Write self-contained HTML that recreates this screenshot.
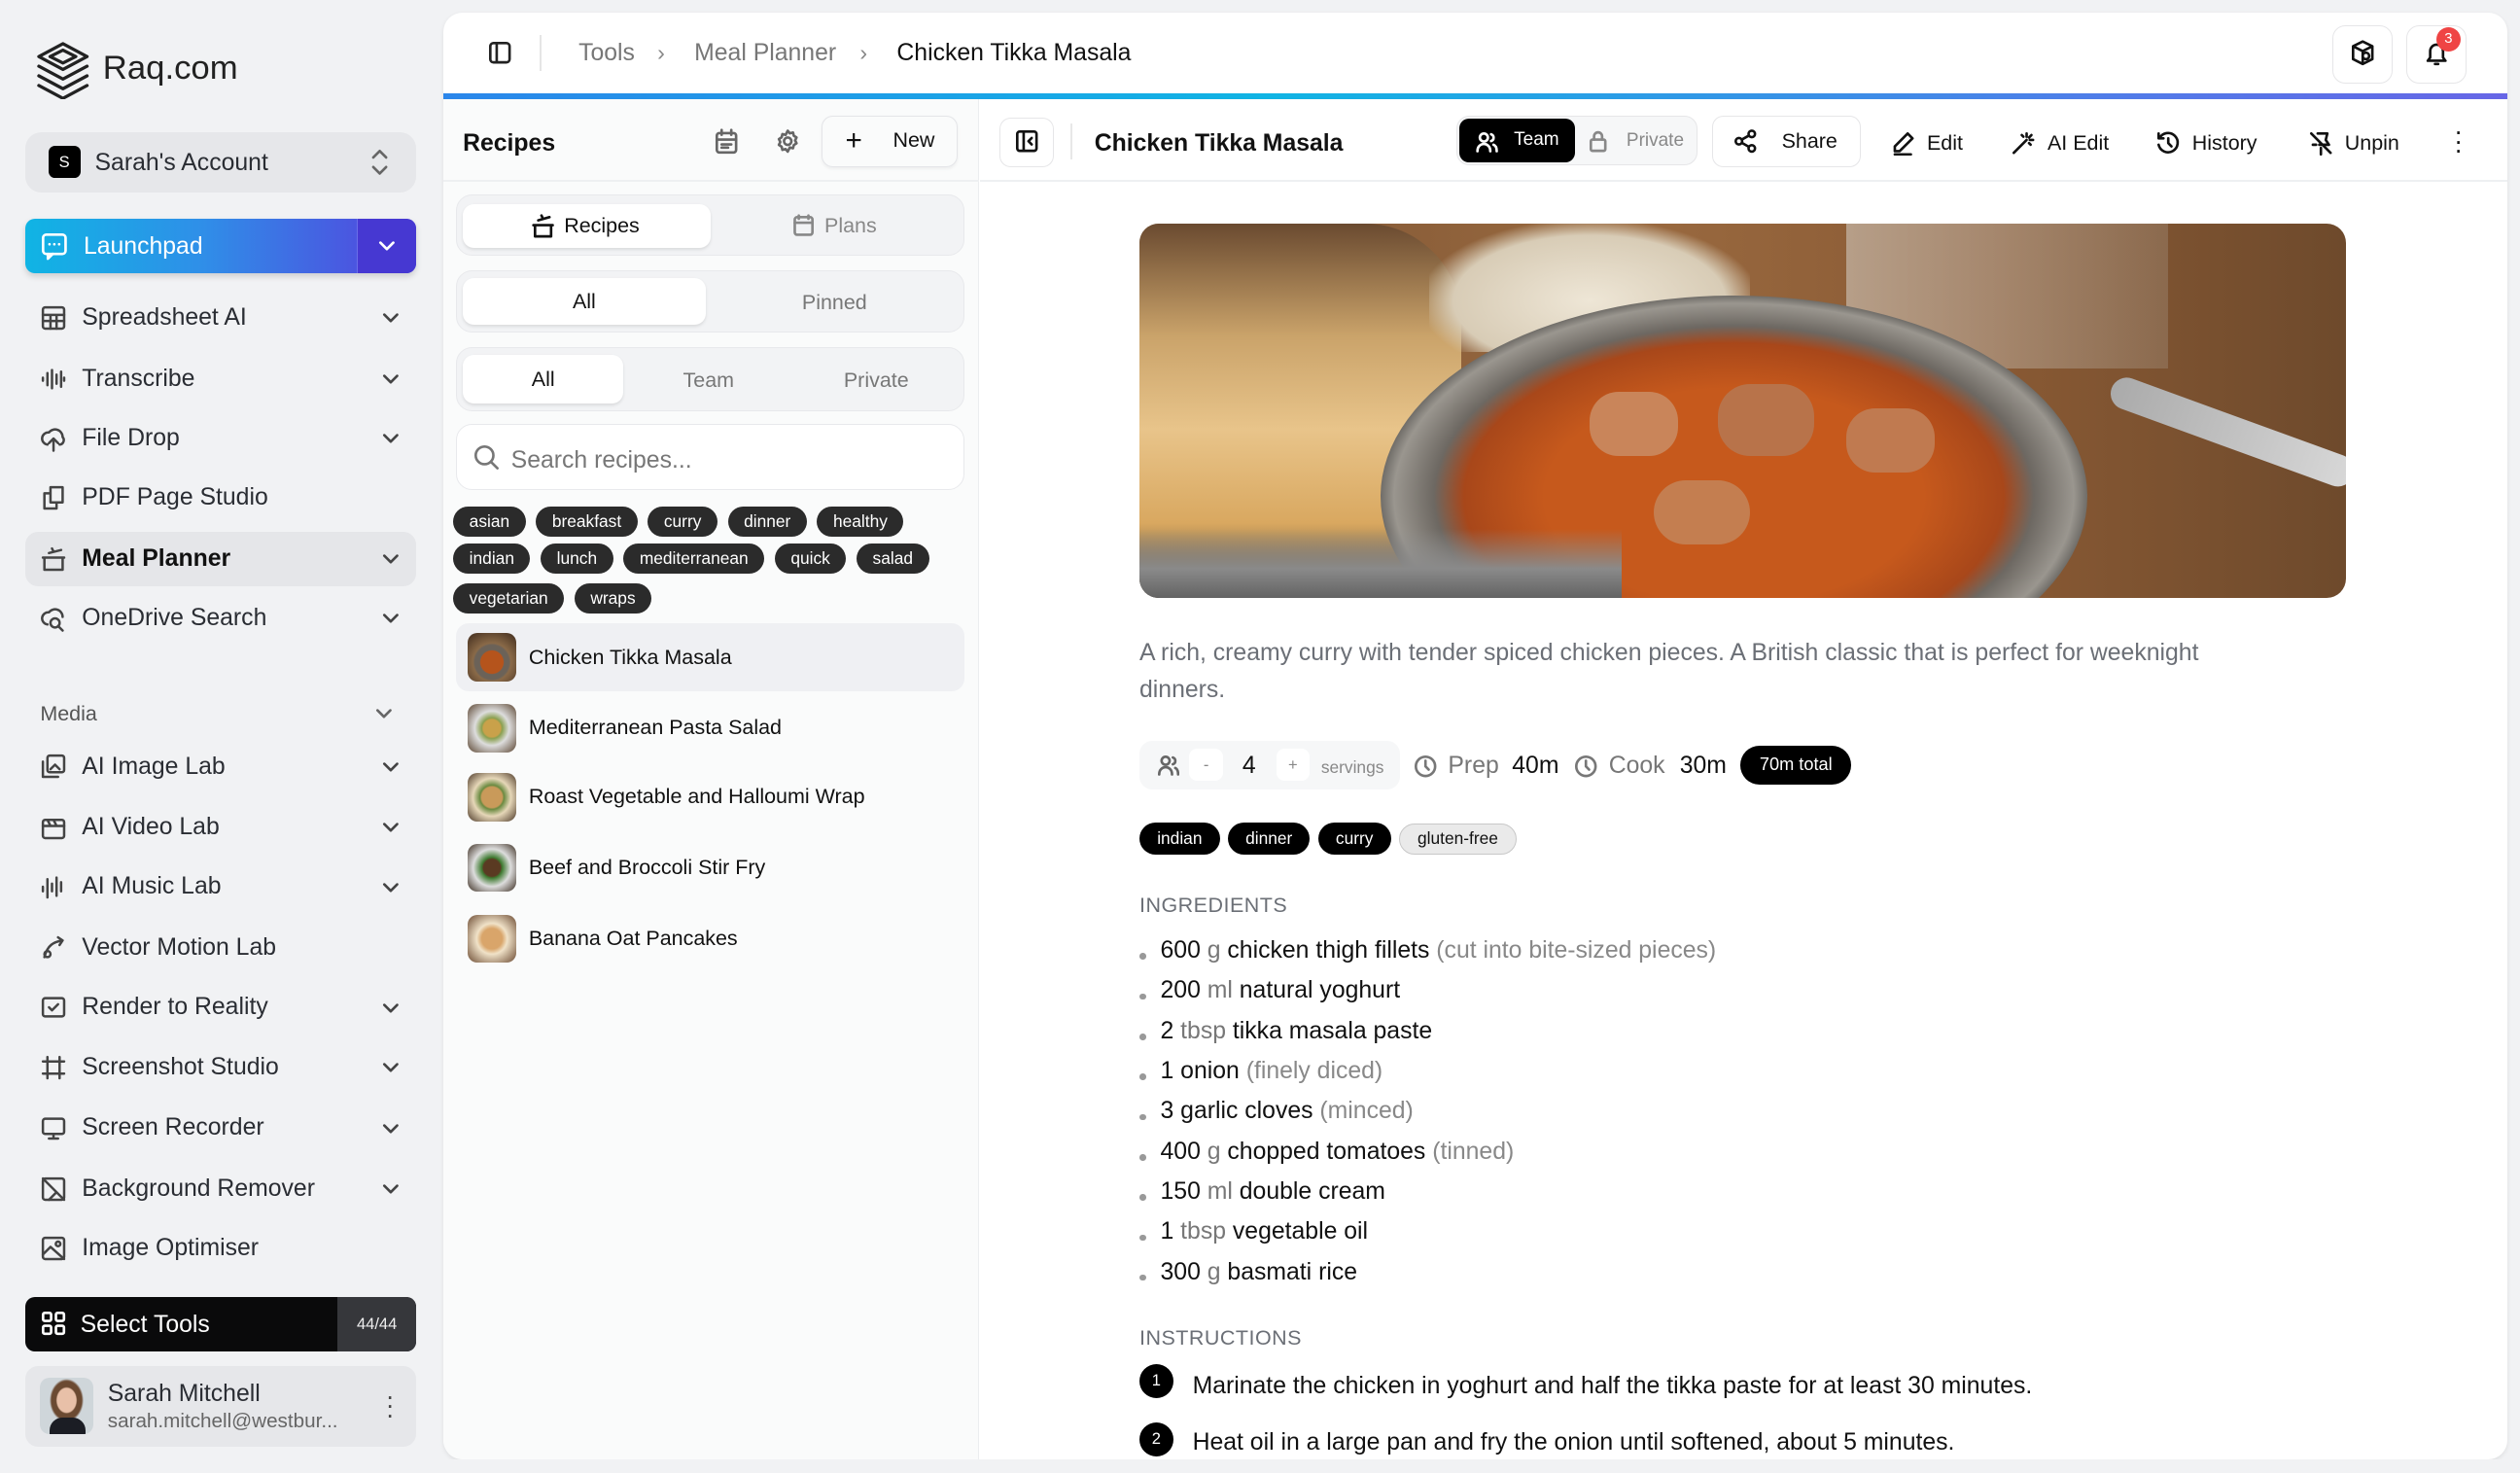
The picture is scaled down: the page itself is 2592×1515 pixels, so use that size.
<!DOCTYPE html>
<html><head><meta charset="utf-8"><style>
*{box-sizing:border-box;margin:0;padding:0}
html,body{width:2592px;height:1515px;overflow:hidden;background:#f1f2f4}
#w{zoom:1.65306;width:1568px;height:917px;position:relative;font-family:"Liberation Sans",sans-serif;color:#111;background:#f1f2f4}
.a{position:absolute}
svg{fill:none;stroke:currentColor;stroke-width:1.6;stroke-linecap:round;stroke-linejoin:round}
.nav{position:absolute;left:16px;width:243px;height:34px;display:flex;align-items:center;padding-left:9px;font-size:15px;color:#2a2d33}
.nav svg{width:17px;height:17px;margin-right:9px;color:#444}
.nav .ch{position:absolute;right:10px;width:12px;height:12px;margin:0}
.tag{display:inline-block;background:#2b2b2b;color:#fff;font-size:10.5px;border-radius:10px;padding:3px 10px;margin:0 2px 4px 0;line-height:13px}
.seg{position:absolute;left:284px;width:316px;background:#f2f3f5;border:1px solid #e8e9ec;border-radius:10px}
.rl{position:absolute;left:284px;width:316px;height:42px;display:flex;align-items:center;font-size:13px;border-radius:8px}
.th{width:30px;height:30px;border-radius:6px;margin:0 8px 0 7px;background:radial-gradient(circle at 50% 60%,#b5541c 0 30%,#6b6258 32% 45%,#8a6a48 50%,#3e2a1c)}
.tb{position:absolute;top:73px;height:30px;display:flex;align-items:center;font-size:13px;color:#111}
.tb svg{width:16px;height:16px;margin-right:7px}
.ing{font-size:15px;line-height:25px;color:#111}
.ing span.g{color:#888}
.ing span.u{color:#777}
.ing li{list-style:none;position:relative;padding-left:13px}
.ing li:before{content:"";position:absolute;left:0;top:14px;width:4px;height:4px;border-radius:2px;background:#999}
.pt{display:inline-block;background:#000;color:#fff;border-radius:10px;padding:1px 11px;margin-right:5px}
</style></head><body><div id="w">
<!-- sidebar -->
<svg class="a" style="left:21px;top:24px;width:36px;height:38px;color:#222;stroke-width:2" viewBox="0 0 36 38"><path d="M18 3 L33 11 L18 19 L3 11Z"/><path d="M3 17 L18 25 L33 17"/><path d="M3 23 L18 31 L33 23"/><path d="M3 29 L18 37 L33 29"/><path d="M10 11 L18 7 L26 11 L18 15Z"/></svg>
<div class="a" style="left:64px;top:31px;font-size:21px;color:#222">Raq.com</div>
<div class="a" style="left:16px;top:82px;width:243px;height:38px;background:#e6e7ea;border-radius:10px"></div>
<div class="a" style="left:30px;top:91px;width:20px;height:20px;background:#000;color:#fff;border-radius:4px;font-size:10px;text-align:center;line-height:20px">S</div>
<div class="a" style="left:59px;top:93px;font-size:15px;color:#2a2d33">Sarah's Account</div>
<svg class="a" style="left:229px;top:92px;width:14px;height:18px;color:#666" viewBox="0 0 14 18"><path d="M3 6l4-4 4 4M3 12l4 4 4-4"/></svg>
<div class="a" style="left:16px;top:136px;width:243px;height:34px;border-radius:6px;background:linear-gradient(90deg,#10b4e4,#2f8fe8 45%,#4b55e0 85%);box-shadow:0 2px 4px rgba(0,0,0,.15)"></div>
<div class="a" style="left:222px;top:136px;width:37px;height:34px;background:#4638d2;border-radius:0 6px 6px 0;border-left:1px solid #6a6ee8"></div>
<svg class="a" style="left:25px;top:144px;width:18px;height:18px;color:#fff" viewBox="0 0 18 18"><rect x="2" y="2" width="14" height="12" rx="2"/><path d="M5 14v3l3-3M6 8h0M9 8h0M12 8h0"/></svg>
<div class="a" style="left:52px;top:145px;font-size:15px;color:#fff">Launchpad</div>
<svg class="a" style="left:235px;top:147px;width:12px;height:12px;color:#fff" viewBox="0 0 12 12"><path d="M2 4l4 4 4-4"/></svg>

<div class="nav" style="top:181px"><svg viewBox="0 0 18 18"><rect x="2" y="2" width="14" height="14" rx="1.5"/><path d="M2 7h14M2 11h14M7 7v9M11 7v9"/></svg>Spreadsheet AI<svg class="ch" viewBox="0 0 12 12"><path d="M2 4l4 4 4-4"/></svg></div>
<div class="nav" style="top:219px"><svg viewBox="0 0 18 18"><path d="M2 8v2M5 5v8M8 3v12M11 6v6M14 4v10M16 8v2"/></svg>Transcribe<svg class="ch" viewBox="0 0 12 12"><path d="M2 4l4 4 4-4"/></svg></div>
<div class="nav" style="top:256px"><svg viewBox="0 0 18 18"><path d="M5 13a4 4 0 1 1 1-8 5 5 0 0 1 9 3 3 3 0 0 1-2 5M9 9v8M6 12l3-3 3 3"/></svg>File Drop<svg class="ch" viewBox="0 0 12 12"><path d="M2 4l4 4 4-4"/></svg></div>
<div class="nav" style="top:293px"><svg viewBox="0 0 18 18"><path d="M6 6H3v10h8v-3M7 2h8v10H7z"/></svg>PDF Page Studio</div>
<div class="nav" style="top:331px;background:#e5e6e9;border-radius:8px;font-weight:bold;color:#111"><svg viewBox="0 0 18 18"><path d="M3 8h12v8H3zM2 8h14M6 5l8-2M9 4l-1-2"/></svg>Meal Planner<svg class="ch" viewBox="0 0 12 12"><path d="M2 4l4 4 4-4"/></svg></div>
<div class="nav" style="top:368px"><svg viewBox="0 0 18 18"><path d="M5 13a4 4 0 1 1 1-8 5 5 0 0 1 9 3"/><circle cx="10" cy="12" r="3"/><path d="M12 14l3 3"/></svg>OneDrive Search<svg class="ch" viewBox="0 0 12 12"><path d="M2 4l4 4 4-4"/></svg></div>
<div class="a" style="left:25px;top:437px;font-size:13px;color:#555">Media</div>
<svg class="a" style="left:233px;top:438px;width:12px;height:12px;color:#666" viewBox="0 0 12 12"><path d="M2 4l4 4 4-4"/></svg>
<div class="nav" style="top:460px"><svg viewBox="0 0 18 18"><rect x="5" y="2" width="11" height="11" rx="1.5"/><path d="M2 6v10h10M7 11l3-3 3 3"/></svg>AI Image Lab<svg class="ch" viewBox="0 0 12 12"><path d="M2 4l4 4 4-4"/></svg></div>
<div class="nav" style="top:498px"><svg viewBox="0 0 18 18"><rect x="2" y="4" width="14" height="12" rx="1.5"/><path d="M2 8h14M5 4l2 4M9 4l2 4"/></svg>AI Video Lab<svg class="ch" viewBox="0 0 12 12"><path d="M2 4l4 4 4-4"/></svg></div>
<div class="nav" style="top:535px"><svg viewBox="0 0 18 18"><path d="M2 9v3M5 4v12M8 7v5M11 3v12M14 6v6"/></svg>AI Music Lab<svg class="ch" viewBox="0 0 12 12"><path d="M2 4l4 4 4-4"/></svg></div>
<div class="nav" style="top:573px"><svg viewBox="0 0 18 18"><path d="M3 15c2-8 6-10 12-11M12 2l3 2-2 3"/><circle cx="5" cy="13" r="2"/></svg>Vector Motion Lab</div>
<div class="nav" style="top:610px"><svg viewBox="0 0 18 18"><rect x="2" y="3" width="14" height="12" rx="1.5"/><path d="M6 9l2 2 4-4"/></svg>Render to Reality<svg class="ch" viewBox="0 0 12 12"><path d="M2 4l4 4 4-4"/></svg></div>
<div class="nav" style="top:647px"><svg viewBox="0 0 18 18"><path d="M5 2v14M13 2v14M2 5h14M2 13h14"/></svg>Screenshot Studio<svg class="ch" viewBox="0 0 12 12"><path d="M2 4l4 4 4-4"/></svg></div>
<div class="nav" style="top:685px"><svg viewBox="0 0 18 18"><rect x="2" y="3" width="14" height="10" rx="1.5"/><path d="M6 16h6M9 13v3"/></svg>Screen Recorder<svg class="ch" viewBox="0 0 12 12"><path d="M2 4l4 4 4-4"/></svg></div>
<div class="nav" style="top:723px"><svg viewBox="0 0 18 18"><rect x="2" y="2" width="14" height="14" rx="1.5"/><path d="M2 2l14 14M6 16l5-5"/></svg>Background Remover<svg class="ch" viewBox="0 0 12 12"><path d="M2 4l4 4 4-4"/></svg></div>
<div class="nav" style="top:760px"><svg viewBox="0 0 18 18"><rect x="2" y="2" width="14" height="14" rx="1.5"/><path d="M2 13l5-5 9 8"/><circle cx="12" cy="6" r="1.5"/></svg>Image Optimiser</div>
<div class="a" style="left:16px;top:807px;width:243px;height:34px;background:#0a0a0b;border-radius:6px"></div>
<div class="a" style="left:210px;top:807px;width:49px;height:34px;background:#36373b;border-radius:0 6px 6px 0;color:#eee;font-size:10px;text-align:center;line-height:34px">44/44</div>
<svg class="a" style="left:25px;top:815px;width:17px;height:17px;color:#fff" viewBox="0 0 17 17"><rect x="2" y="2" width="5" height="5" rx="1"/><rect x="10" y="2" width="5" height="5" rx="1"/><rect x="2" y="10" width="5" height="5" rx="1"/><rect x="10" y="10" width="5" height="5" rx="1"/></svg>
<div class="a" style="left:50px;top:816px;font-size:15px;color:#fff">Select Tools</div>
<div class="a" style="left:16px;top:850px;width:243px;height:50px;background:#e6e7ea;border-radius:8px"></div>
<div class="a" style="left:25px;top:857px;width:33px;height:35px;border-radius:6px;background:radial-gradient(ellipse at 50% 40%,#e8c0a8 0 25%,#6b4a32 28% 40%,#cfd6da 45%);overflow:hidden"><div style="position:absolute;bottom:0;left:6px;width:22px;height:10px;background:#1b1d24;border-radius:8px 8px 0 0"></div></div>
<div class="a" style="left:67px;top:859px;font-size:15px;color:#2a2d33">Sarah Mitchell</div>
<div class="a" style="left:67px;top:877px;font-size:12.5px;color:#666">sarah.mitchell@westbur...</div>
<div class="a" style="left:240px;top:866px;font-size:16px;color:#444;line-height:6px">·<br>·<br>·</div>

<!-- main card -->
<div class="a" style="left:276px;top:8px;width:1284px;height:900px;background:#fff;border-radius:12px;box-shadow:0 1px 3px rgba(0,0,0,.08);overflow:hidden">
 <div class="a" style="left:0;top:50px;width:1284px;height:4px;background:linear-gradient(90deg,#2b86ea,#10b4e4 40%,#4f7de8 80%,#6766e6)"></div>
 <div class="a" style="left:0;top:54px;width:333px;height:846px;background:#fafbfb;border-right:1px solid #eceef0"></div>
 <div class="a" style="left:334px;top:104px;width:950px;height:1px;background:#eef0f2"></div>
 <div class="a" style="left:0;top:104px;width:333px;height:1px;background:#eef0f2"></div>
</div>
<svg class="a" style="left:303px;top:25px;width:16px;height:16px;color:#222" viewBox="0 0 16 16"><rect x="2" y="2" width="12" height="12" rx="2"/><path d="M6 2v12"/></svg>
<div class="a" style="left:336px;top:22px;width:1px;height:22px;background:#e5e5e5"></div>
<div class="a" style="left:360px;top:25px;font-size:15px;color:#777">Tools</div>
<div class="a" style="left:409px;top:25px;font-size:14px;color:#888">›</div>
<div class="a" style="left:432px;top:25px;font-size:15px;color:#777">Meal Planner</div>
<div class="a" style="left:535px;top:25px;font-size:14px;color:#888">›</div>
<div class="a" style="left:558px;top:25px;font-size:15px;color:#111">Chicken Tikka Masala</div>
<div class="a" style="left:1451px;top:16px;width:38px;height:36px;border:1px solid #e6e6e8;border-radius:8px"></div>
<svg class="a" style="left:1462px;top:25px;width:16px;height:17px;color:#111" viewBox="0 0 16 17"><path d="M8 1l6 3v8l-6 3-6-3V4zM2 4l6 3 6-3M8 7v8"/><circle cx="10" cy="10" r="2"/></svg>
<div class="a" style="left:1497px;top:16px;width:38px;height:36px;border:1px solid #e6e6e8;border-radius:8px"></div>
<svg class="a" style="left:1508px;top:25px;width:16px;height:17px;color:#111" viewBox="0 0 16 17"><path d="M4 11V7a4 4 0 0 1 8 0v4l1.5 2h-11zM7 15h2"/></svg>
<div class="a" style="left:1516px;top:17px;width:15px;height:15px;border-radius:8px;background:#ef4444;color:#fff;font-size:9px;text-align:center;line-height:15px">3</div>

<!-- recipes panel -->
<div class="a" style="left:288px;top:81px;font-size:15px;font-weight:bold">Recipes</div>
<svg class="a" style="left:444px;top:80px;width:16px;height:17px;color:#666" viewBox="0 0 16 17"><rect x="2" y="3" width="12" height="12" rx="1.5"/><path d="M2 7h12M5 1v3M11 1v3M5 10h6M5 12h4"/></svg>
<svg class="a" style="left:482px;top:80px;width:16px;height:16px;color:#666" viewBox="0 0 16 16"><circle cx="8" cy="8" r="2.3"/><path d="M8 1.5l1.3 1.6 2-.5.5 2 1.7 1.1-.9 1.8.9 1.8-1.7 1.1-.5 2-2-.5L8 14.5l-1.3-1.6-2 .5-.5-2L2.5 10.3l.9-1.8-.9-1.8 1.7-1.1.5-2 2 .5z"/></svg>
<div class="a" style="left:511px;top:72px;width:85px;height:32px;border:1px solid #e4e5e8;border-radius:7px;font-size:13px;line-height:30px;padding-left:44px;box-shadow:0 1px 2px rgba(0,0,0,.05)">New</div>
<div class="a" style="left:526px;top:80px;font-size:18px;line-height:16px">+</div>
<div class="seg" style="top:121px;height:38px"></div>
<div class="a" style="left:288px;top:127px;width:154px;height:27px;background:#fff;border-radius:7px;box-shadow:0 1px 2px rgba(0,0,0,.1);font-size:13px;line-height:27px;padding-left:63px">Recipes</div>
<svg class="a" style="left:331px;top:133px;width:14px;height:15px;color:#111" viewBox="0 0 14 15"><path d="M2 7h10v7H2zM1 7h12M4 4l7-2M7 3l-1-2"/></svg>
<svg class="a" style="left:493px;top:133px;width:14px;height:14px;color:#888" viewBox="0 0 14 14"><rect x="1.5" y="2" width="11" height="11" rx="1.5"/><path d="M1.5 5.5h11M4 1v2M10 1v2"/></svg>
<div class="a" style="left:513px;top:133px;font-size:13px;color:#888">Plans</div>
<div class="seg" style="top:168px;height:39px"></div>
<div class="a" style="left:288px;top:173px;width:151px;height:29px;background:#fff;border-radius:7px;box-shadow:0 1px 2px rgba(0,0,0,.1);font-size:13px;line-height:30px;text-align:center">All</div>
<div class="a" style="left:499px;top:181px;font-size:13px;color:#777">Pinned</div>
<div class="seg" style="top:216px;height:40px"></div>
<div class="a" style="left:288px;top:221px;width:100px;height:30px;background:#fff;border-radius:7px;box-shadow:0 1px 2px rgba(0,0,0,.1);font-size:13px;line-height:31px;text-align:center">All</div>
<div class="a" style="left:425px;top:229px;font-size:13px;color:#777">Team</div>
<div class="a" style="left:525px;top:229px;font-size:13px;color:#777">Private</div>
<div class="a" style="left:284px;top:264px;width:316px;height:41px;border:1px solid #e8e9ec;border-radius:10px;background:#fff"></div>
<svg class="a" style="left:294px;top:276px;width:17px;height:17px;color:#777" viewBox="0 0 17 17"><circle cx="7.5" cy="7.5" r="5.5"/><path d="M11.5 11.5l4 4"/></svg>
<div class="a" style="left:318px;top:278px;font-size:15px;color:#777">Search recipes...</div>
<div class="a" style="left:282px;top:315px;width:320px;line-height:0">
<span class="tag">asian</span> <span class="tag">breakfast</span> <span class="tag">curry</span> <span class="tag">dinner</span> <span class="tag">healthy</span><br><span class="tag">indian</span> <span class="tag">lunch</span> <span class="tag">mediterranean</span> <span class="tag">quick</span> <span class="tag">salad</span><br><span class="tag" style="margin-top:2px">vegetarian</span> <span class="tag">wraps</span></div>
<div class="rl" style="top:388px;background:#eff0f3"><div class="th"></div>Chicken Tikka Masala</div>
<div class="rl" style="top:432px"><div class="th" style="background:radial-gradient(circle,#c9a14a 0 25%,#8aa050 30%,#ddd 50%,#5a4430)"></div>Mediterranean Pasta Salad</div>
<div class="rl" style="top:475px"><div class="th" style="background:radial-gradient(circle,#c99a5a 0 30%,#6a8a40 35%,#e6d7b8 55%,#4a3626)"></div>Roast Vegetable and Halloumi Wrap</div>
<div class="rl" style="top:519px"><div class="th" style="background:radial-gradient(circle,#5a3a22 0 25%,#3e7a30 30%,#ddd 55%,#3a2c20)"></div>Beef and Broccoli Stir Fry</div>
<div class="rl" style="top:563px"><div class="th" style="background:radial-gradient(circle,#d9a56a 0 30%,#f0e2c8 45%,#6b4a32)"></div>Banana Oat Pancakes</div>

<!-- detail toolbar -->
<div class="a" style="left:622px;top:73px;width:34px;height:31px;border:1px solid #e6e6e8;border-radius:7px"></div>
<svg class="a" style="left:631px;top:80px;width:16px;height:16px;color:#111" viewBox="0 0 16 16"><rect x="2" y="2" width="12" height="12" rx="1.5"/><path d="M6 2v12M11 6l-2 2 2 2"/></svg>
<div class="a" style="left:666px;top:77px;width:1px;height:22px;background:#e8e8e8"></div>
<div class="a" style="left:681px;top:81px;font-size:15px;font-weight:bold">Chicken Tikka Masala</div>
<div class="a" style="left:906px;top:72px;width:150px;height:31px;background:#f6f7f8;border:1px solid #e6e6e8;border-radius:8px"></div>
<div class="a" style="left:908px;top:74px;width:72px;height:27px;background:#000;border-radius:6px;color:#fff;font-size:11.5px;line-height:27px;padding-left:34px">Team</div>
<svg class="a" style="left:918px;top:81px;width:14px;height:14px;color:#fff" viewBox="0 0 14 14"><circle cx="5" cy="4.5" r="2.5"/><path d="M1 13c0-3 2-4.5 4-4.5s4 1.5 4 4.5M9.5 2.5a2.2 2.2 0 0 1 0 4.2M11 9c1.5.5 2 2 2 4"/></svg>
<svg class="a" style="left:988px;top:80px;width:13px;height:15px;color:#888" viewBox="0 0 13 15"><rect x="2" y="7" width="9" height="7" rx="1"/><path d="M4 7V5a2.5 2.5 0 0 1 5 0v2"/></svg>
<div class="a" style="left:1012px;top:81px;font-size:11.5px;color:#888">Private</div>
<div class="a" style="left:1065px;top:72px;width:93px;height:32px;border:1px solid #e6e6e8;border-radius:7px;font-size:13px;line-height:31px;padding-left:43px">Share</div>
<svg class="a" style="left:1078px;top:80px;width:16px;height:16px" viewBox="0 0 16 16"><circle cx="12" cy="3.5" r="2"/><circle cx="4" cy="8" r="2"/><circle cx="12" cy="12.5" r="2"/><path d="M5.8 7l4.4-2.5M5.8 9l4.4 2.5"/></svg>
<div class="tb" style="left:1176px;top:74px"><svg viewBox="0 0 16 16"><path d="M11 2l3 3-8 8H3v-3zM3 15h10"/></svg>Edit</div>
<div class="tb" style="left:1251px;top:74px"><svg viewBox="0 0 16 16"><path d="M2 14l8-8M10 2v2M13 3l-1.5 1.5M14 6h-2M12.5 9l-1-1M7 3l1 1"/></svg>AI Edit</div>
<div class="tb" style="left:1341px;top:74px"><svg viewBox="0 0 16 16"><path d="M2.5 5A6 6 0 1 1 2 9M2 2v3h3M8 5v3l2 2"/></svg>History</div>
<div class="tb" style="left:1436px;top:74px"><svg viewBox="0 0 16 16"><path d="M2 2l12 12M6 2h6l-1 4 2 3H7M8 11v4M3 9h2"/></svg>Unpin</div>
<div class="a" style="left:1527px;top:79px;font-size:16px;line-height:6px;color:#111">·<br>·<br>·</div>

<!-- hero image -->
<div class="a" style="left:709px;top:139px;width:751px;height:233px;border-radius:12px;overflow:hidden;background:linear-gradient(90deg,#7a5232,#9a6a40 40%,#8a5a34 70%,#6e4a2c)">
 <div class="a" style="left:440px;top:0;width:200px;height:90px;background:linear-gradient(90deg,rgba(220,220,215,.5),rgba(200,200,195,.2))"></div>
 <div class="a" style="left:-10px;top:0;width:210px;height:233px;background:linear-gradient(180deg,#6a4a30,#caa36a 30%,#e8c48a 55%,#d9a860 80%,#3a3a3a);border-radius:0 60px 40px 0"></div>
 <div class="a" style="left:180px;top:0;width:200px;height:80px;background:radial-gradient(ellipse at 50% 60%,#eee6d6,#d8ccb6 60%,transparent 75%)"></div>
 <div class="a" style="left:150px;top:45px;width:440px;height:250px;border-radius:50%;background:radial-gradient(ellipse,#c6591c 0 38%,#a8471a 54%,#6d6862 60%,#9a968f 68%,#4c4a47 73%)"></div>
 <div class="a" style="left:280px;top:105px;width:55px;height:40px;border-radius:18px;background:#c9855a"></div>
 <div class="a" style="left:360px;top:100px;width:60px;height:45px;border-radius:20px;background:#b8734a"></div>
 <div class="a" style="left:440px;top:115px;width:55px;height:40px;border-radius:18px;background:#c07a50"></div>
 <div class="a" style="left:320px;top:160px;width:60px;height:40px;border-radius:20px;background:#c47e50"></div>
 <div class="a" style="left:600px;top:120px;width:160px;height:20px;border-radius:10px;background:linear-gradient(90deg,#aaa,#d8d8d8);transform:rotate(20deg)"></div>
 <div class="a" style="left:0;top:190px;width:300px;height:50px;background:linear-gradient(0deg,#555,#8a8a8a 50%,transparent)"></div>
</div>

<!-- description -->
<div class="a" style="left:709px;top:395px;width:705px;font-size:15px;line-height:23px;color:#6b6f76">A rich, creamy curry with tender spiced chicken pieces. A British classic that is perfect for weeknight dinners.</div>
<div class="a" style="left:709px;top:461px;width:162px;height:30px;background:#f6f7f8;border-radius:8px"></div>
<svg class="a" style="left:719px;top:469px;width:15px;height:15px;color:#666" viewBox="0 0 15 15"><circle cx="6" cy="4.5" r="2.5"/><path d="M2 13c0-3 2-4.5 4-4.5s4 1.5 4 4.5M10.5 2.5a2.2 2.2 0 0 1 0 4.2M12 9c1.2.5 1.8 2 1.8 4"/></svg>
<div class="a" style="left:740px;top:466px;width:21px;height:20px;background:#fff;border-radius:5px;font-size:10px;color:#888;text-align:center;line-height:20px">-</div>
<div class="a" style="left:773px;top:468px;font-size:15px">4</div>
<div class="a" style="left:794px;top:466px;width:21px;height:20px;background:#fff;border-radius:5px;font-size:10px;color:#888;text-align:center;line-height:20px">+</div>
<div class="a" style="left:822px;top:471px;font-size:10.5px;color:#888">servings</div>
<svg class="a" style="left:879px;top:469px;width:16px;height:16px;color:#777" viewBox="0 0 16 16"><circle cx="8" cy="8" r="6"/><path d="M8 4.5V8l2 2"/></svg>
<div class="a" style="left:901px;top:468px;font-size:15px;color:#777">Prep <span style="color:#111;margin-left:4px">40m</span></div>
<svg class="a" style="left:979px;top:469px;width:16px;height:16px;color:#777" viewBox="0 0 16 16"><circle cx="8" cy="8" r="6"/><path d="M8 4.5V8l2 2"/></svg>
<div class="a" style="left:1001px;top:468px;font-size:15px;color:#777">Cook <span style="color:#111;margin-left:5px">30m</span></div>
<div class="a" style="left:1083px;top:464px;width:69px;height:24px;background:#000;color:#fff;border-radius:12px;font-size:11px;text-align:center;line-height:24px">70m total</div>
<div class="a" style="left:709px;top:512px;line-height:18px;font-size:10.5px">
<span class="pt">indian</span><span class="pt">dinner</span><span class="pt">curry</span><span style="display:inline-block;background:#eaeaea;border:1px solid #c8c8c8;color:#111;border-radius:10px;padding:0 11px">gluten-free</span></div>
<div class="a" style="left:709px;top:556px;font-size:13px;color:#6b6f76;letter-spacing:.3px">INGREDIENTS</div>
<ul class="a ing" style="left:709px;top:579px">
<li>600 <span class="u">g</span> chicken thigh fillets <span class="g">(cut into bite-sized pieces)</span></li>
<li>200 <span class="u">ml</span> natural yoghurt</li>
<li>2 <span class="u">tbsp</span> tikka masala paste</li>
<li>1 onion <span class="g">(finely diced)</span></li>
<li>3 garlic cloves <span class="g">(minced)</span></li>
<li>400 <span class="u">g</span> chopped tomatoes <span class="g">(tinned)</span></li>
<li>150 <span class="u">ml</span> double cream</li>
<li>1 <span class="u">tbsp</span> vegetable oil</li>
<li>300 <span class="u">g</span> basmati rice</li>
</ul>
<div class="a" style="left:709px;top:825px;font-size:13px;color:#6b6f76;letter-spacing:.3px">INSTRUCTIONS</div>
<div class="a" style="left:709px;top:849px;width:21px;height:21px;border-radius:11px;background:#000;color:#fff;font-size:10px;text-align:center;line-height:21px">1</div>
<div class="a" style="left:742px;top:854px;font-size:15px">Marinate the chicken in yoghurt and half the tikka paste for at least 30 minutes.</div>
<div class="a" style="left:709px;top:885px;width:21px;height:21px;border-radius:11px;background:#000;color:#fff;font-size:10px;text-align:center;line-height:21px">2</div>
<div class="a" style="left:742px;top:889px;font-size:15px">Heat oil in a large pan and fry the onion until softened, about 5 minutes.</div>
<div class="a" style="left:276px;top:908px;width:1284px;height:10px;background:#f1f2f4"></div>
</div></body></html>
